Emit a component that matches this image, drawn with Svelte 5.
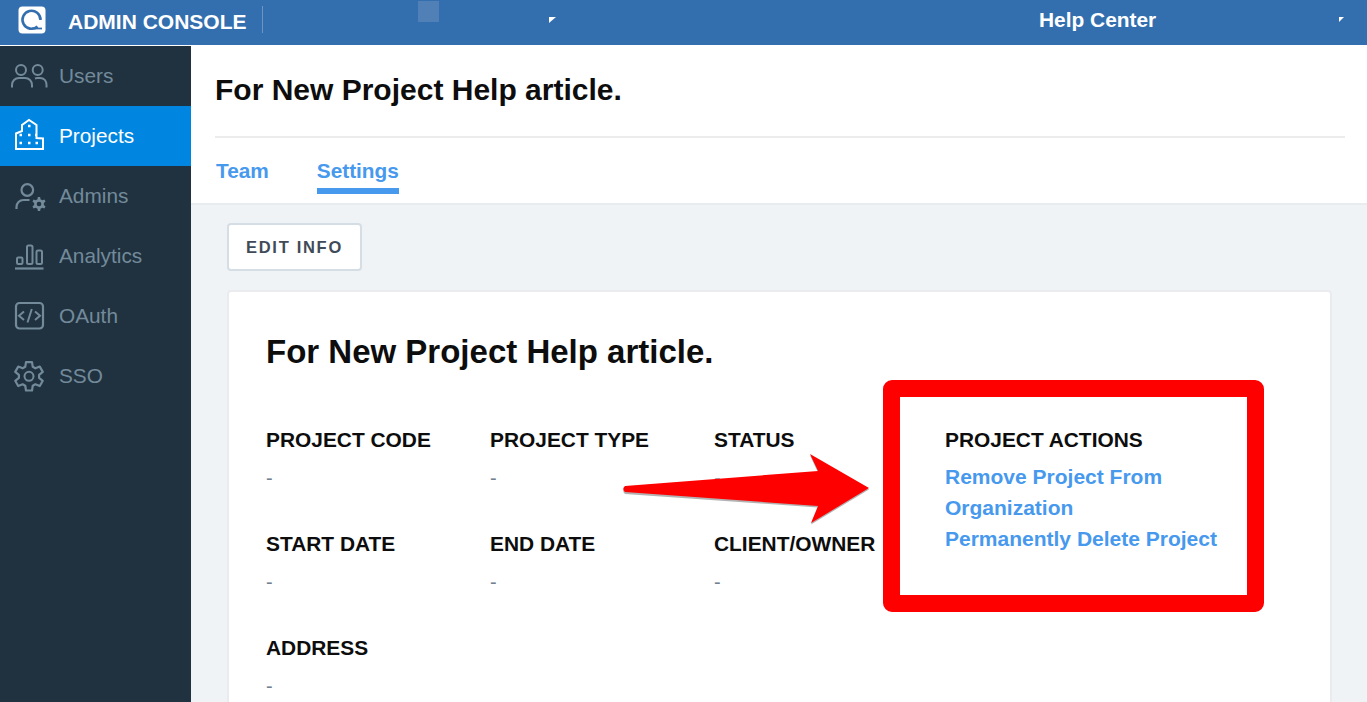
<script>
  const nav = [
    { label: 'Users', icon: 'users' },
    { label: 'Projects', icon: 'projects', active: true },
    { label: 'Admins', icon: 'admins' },
    { label: 'Analytics', icon: 'analytics' },
    { label: 'OAuth', icon: 'oauth' },
    { label: 'SSO', icon: 'sso' }
  ]

  const rows = [
    ['PROJECT CODE', 'PROJECT TYPE', 'STATUS'],
    ['START DATE', 'END DATE', 'CLIENT/OWNER'],
    ['ADDRESS']
  ]

  // cog outline, first tooth points straight up
  function gear(n, cx, cy, outer, inner, spread) {
    let pts = []
    for (let i = 0; i < n; i++) {
      const a = -Math.PI / 2 + (i * 2 * Math.PI) / n
      for (const [r, t] of [
        [inner, a - spread * 1.25],
        [outer, a - spread * 0.7],
        [outer, a + spread * 0.7],
        [inner, a + spread * 1.25]
      ]) {
        pts.push((cx + r * Math.cos(t)).toFixed(2) + ',' + (cy + r * Math.sin(t)).toFixed(2))
      }
    }
    return pts.join(' ')
  }
</script>

<div class="page">
  <header class="topbar">
    <div class="logo">
      <svg width="28" height="28" viewBox="0 0 28 28">
        <rect x="0.5" y="0.5" width="27" height="27" rx="4" fill="#fff" />
        <path d="M19.500 20.500A9 9 0 1 1 22.500 14" fill="none" stroke="#336fae" stroke-width="2.600" />
        <path d="M14 22.500H24" stroke="#336fae" stroke-width="1.800" />
      </svg>
    </div>
    <div class="brand">ADMIN CONSOLE</div>
    <div class="sep"></div>
    <div class="square"></div>
    <div class="caret first"></div>
    <div class="help">Help Center</div>
    <div class="caret last"></div>
  </header>

  <div class="body">
    <aside class="sidebar">
      {#each nav as item}
        <div class="nav-item" class:active={item.active}>
          <svg class="icon" width="36" height="36" viewBox="0 0 36 36" fill="none" stroke="currentColor" stroke-width="2">
            {#if item.icon === 'users'}
              <circle cx="9" cy="12" r="5" />
              <circle cx="25.700" cy="12" r="5" />
              <path d="M0 29.500V27c0-4 3-7 7-7h6c4 0 7 3 7 7v2.500" />
              <path d="M23 20.500c.7-.3 1.500-.5 2.300-.5H28c4 0 6.500 3 6.500 7v2.500" />
            {:else if item.icon === 'projects'}
              <path d="M4 31V15.500L10 13V7l7-5 7.500 5v13l6.500 .5V31z" />
              <path d="M7.500 25h2.500M16 25h2.500M23.500 25h2.500M7.500 17h2.500M16 17h2.500M16 8h2.500M23 17h1.500" stroke-width="2.600" />
            {:else if item.icon === 'admins'}
              <circle cx="15.300" cy="12" r="5.800" stroke-width="2.200" />
              <path d="M4.500 31v-2c0-4 3-7 7-7h6" stroke-width="2.200" />
              <polygon points={gear(6, 27, 26, 7, 5, 0.24)} fill="currentColor" stroke="none" />
              <circle cx="27" cy="26" r="2.300" fill="#20323f" stroke="none" />
            {:else if item.icon === 'analytics'}
              <rect x="5" y="19.500" width="5.500" height="6.500" rx="1.200" />
              <rect x="15" y="7.500" width="5.500" height="18.500" rx="1.500" />
              <rect x="24.500" y="12.500" width="5.500" height="13.500" rx="1.500" />
              <path d="M3 30.500h28.500" stroke-width="2.200" />
            {:else if item.icon === 'oauth'}
              <rect x="4" y="5" width="27" height="25.500" rx="3.500" stroke-width="2.200" />
              <path d="M12 13.500l-5 4.200 5 4.200M23 13.500l5 4.200-5 4.200M19.800 11l-4.300 13.500" />
            {:else}
              <circle cx="17" cy="18.300" r="4.500" />
              <polygon points={gear(6, 17, 18.300, 14.500, 10.200, 0.3)} stroke-width="2.200" stroke-linejoin="round" />
            {/if}
          </svg>
          <span>{item.label}</span>
        </div>
      {/each}
    </aside>

    <main class="main">
      <section class="head">
        <h1>For New Project Help article.</h1>
        <nav class="tabs">
          <div class="tab">Team</div>
          <div class="tab selected">Settings</div>
        </nav>
      </section>

      <section class="content">
        <button class="edit">EDIT INFO</button>
        <div class="card">
          <h2>For New Project Help article.</h2>
          <div class="details">
            <div class="fields">
              {#each rows as row}
                {#each row as label}
                  <div class="field">
                    <div class="label">{label}</div>
                    <div class="value">-</div>
                  </div>
                {/each}
              {/each}
            </div>
            <div class="actions">
              <div class="label">PROJECT ACTIONS</div>
              <div class="link first-link">Remove Project From Organization</div>
              <div class="link">Permanently Delete Project</div>
            </div>
          </div>
        </div>
      </section>
    </main>
  </div>

  <!-- screenshot annotation drawn over the page -->
  <div class="callout"></div>
  <svg class="arrow" width="260" height="80" viewBox="0 0 260 80">
    <path d="M4 36.500Q.5 39.500 4 42.500L197 56 190 73 248 38 189 4 197 21Z" fill="#555" opacity=".45" transform="translate(0 1.500)" />
    <path d="M4 36Q.5 39 4 42L197 56 190 73 248 38 189 4 197 21Z" fill="#f00" />
  </svg>
</div>

<style>
  :global(body) {
    margin: 0;
    background: #fff;
    overflow: hidden;
  }
  .page {
    position: relative;
    width: 1367px;
    height: 702px;
    overflow: hidden;
    background: #fff;
    font-family: "Liberation Sans", Arial, sans-serif;
  }
  .topbar {
    height: 45px;
    background: #336fae;
    display: flex;
    align-items: flex-start;
    color: #fff;
    font-weight: bold;
  }
  .logo {
    margin: 6px 0 0 18px;
    height: 28px;
  }
  .brand {
    margin: 10px 0 0 22px;
    font-size: 21px;
    line-height: 24px;
    width: 178px;
    white-space: nowrap;
  }
  .sep {
    width: 1px;
    height: 27px;
    margin: 6px 0 0 16px;
    background: #6c95c3;
  }
  .square {
    width: 21px;
    height: 21px;
    margin: 1px 0 0 155px;
    background: #5080b5;
  }
  .caret {
    width: 0;
    height: 0;
    margin-top: 17px;
    border-top: 6px solid #fff;
    border-right: 7px solid transparent;
  }
  .caret.first {
    margin-left: 110px;
  }
  .help {
    margin: 8px 0 0 483px;
    font-size: 20.900px;
    line-height: 24px;
    width: 117px;
    white-space: nowrap;
  }
  .caret.last {
    margin-left: 183px;
    border-top-width: 5px;
    border-right-width: 5px;
  }
  .body {
    display: flex;
    height: 656px;
    margin-top: 1px;
  }
  .sidebar {
    width: 191px;
    flex: none;
    background: #20323f;
  }
  .nav-item {
    height: 60px;
    display: flex;
    align-items: center;
    padding-left: 12px;
    gap: 11px;
    color: #738a9b;
    font-size: 20.800px;
  }
  .nav-item.active {
    background: #0086e0;
    color: #fff;
  }
  .icon {
    overflow: visible;
  }
  .main {
    flex: 1;
    min-width: 0;
    display: flex;
    flex-direction: column;
  }
  .head {
    flex: none;
    height: 157px;
    background: #fff;
    border-bottom: 2px solid #e9ecef;
    padding: 0 22px 0 24px;
  }
  h1 {
    margin: 0;
    height: 92px;
    box-sizing: border-box;
    padding-top: 26px;
    line-height: 35px;
    font-size: 30px;
    color: #0d0d0d;
    border-bottom: 2px solid #ececec;
  }
  .tabs {
    display: flex;
    gap: 48px;
    padding-top: 21px;
    padding-left: 1px;
  }
  .tab {
    color: #4799ee;
    font-size: 20.800px;
    font-weight: bold;
    line-height: 24px;
    padding-bottom: 5px;
    border-bottom: 6px solid transparent;
  }
  .tab.selected {
    border-bottom-color: #4799ee;
  }
  .content {
    flex: 1;
    min-height: 0;
    background: #f0f3f6;
    padding: 18px 35px 0 36px;
  }
  .edit {
    display: block;
    width: 135px;
    height: 48px;
    padding: 0;
    background: #fff;
    border: 2px solid #d5dde5;
    border-radius: 4px;
    color: #3f4b57;
    font-family: inherit;
    font-size: 16.500px;
    font-weight: bold;
    letter-spacing: 1.700px;
  }
  .card {
    margin-top: 19px;
    height: 420px;
    background: #fff;
    border: 2px solid #e9ebee;
    border-radius: 4px;
    padding: 40px 36px 0 37px;
    color: #0d0d0d;
  }
  h2 {
    margin: 0;
    font-size: 33px;
    line-height: 40px;
    font-weight: bold;
  }
  .details {
    display: flex;
    margin-top: 56px;
  }
  .fields {
    width: 679px;
    flex: none;
    display: grid;
    grid-template-columns: repeat(3, 224px);
    grid-auto-rows: 104px;
    align-content: start;
  }
  .field {
    white-space: nowrap;
  }
  .label {
    font-size: 20.900px;
    line-height: 24px;
    font-weight: bold;
    white-space: nowrap;
  }
  .value {
    margin-top: 14px;
    font-size: 20px;
    line-height: 24px;
    color: #73818e;
  }
  .actions {
    width: 290px;
  }
  .link {
    color: #4799ee;
    font-size: 21px;
    font-weight: bold;
    line-height: 31px;
  }
  .first-link {
    margin-top: 9px;
    width: 260px;
  }
  .callout {
    position: absolute;
    left: 883px;
    top: 380px;
    width: 347px;
    height: 198px;
    border: 17px solid #f00;
    border-radius: 9px;
  }
  .arrow {
    position: absolute;
    left: 621px;
    top: 450px;
  }
</style>
